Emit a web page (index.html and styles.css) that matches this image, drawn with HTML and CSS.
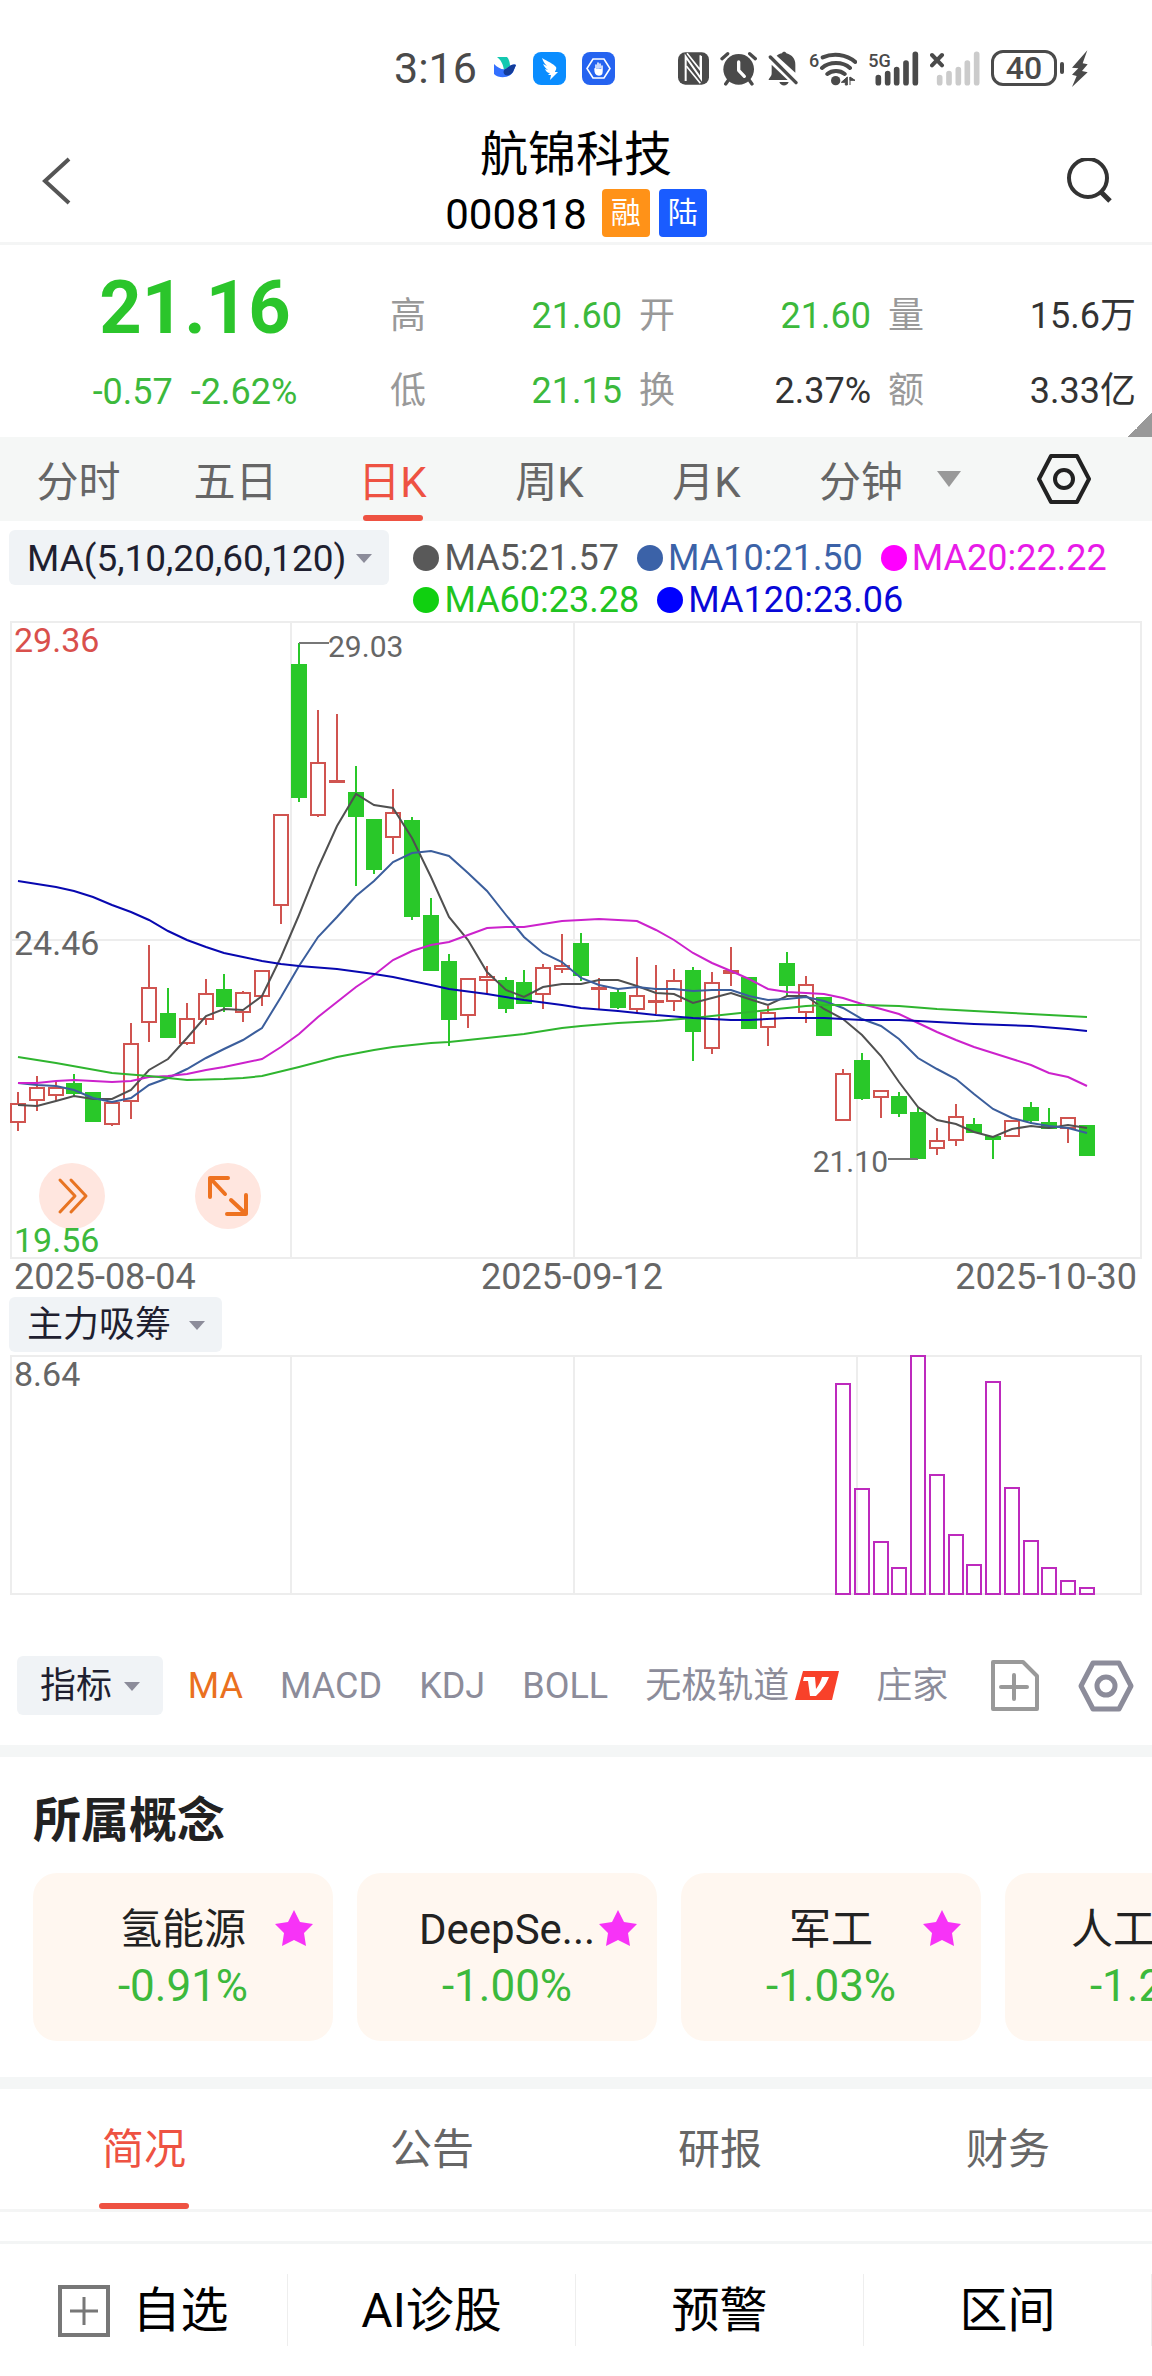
FILE: index.html
```html
<!DOCTYPE html>
<html lang="zh-CN">
<head>
<meta charset="utf-8">
<meta name="viewport" content="width=device-width, initial-scale=1">
<title>航锦科技 000818</title>
<link rel="stylesheet" href="styles.css">
</head>
<body>
<div class="status-bar">
  <div class="status-group status-left">
    <span class="clock">3:16</span>
    <svg width="24" height="24" viewBox="0 0 24 24" aria-hidden="true"><path d="M4 1h10c2 2 3 6 3 9l-6 4C10 8 8 4 4 1z" fill="#14c8b0"/><path d="M1 8c4 4 8 6 12 5 3-1 6-6 10-4l-3 7c-3 6-14 7-19 2z" fill="#3370ff"/><path d="M12 13c3-1 6-6 11-4l-3 7c-2 3-5 4-8 3-2-2-2-4 0-6z" fill="#133c9a"/></svg>
    <svg class="app-icon" width="33" height="33" viewBox="0 0 33 33" aria-hidden="true"><rect width="33" height="33" rx="8" fill="#0a8dff"/><path d="M9 6c5 3 12 6 14 9 1 2-1 4-1 5h3l-8 8 1-5h-3l2-2c-3 0-4-2-5-4l3 1c-3-2-4-4-5-6l4 2c-3-3-4-5-5-8z" fill="#fff"/></svg>
    <svg width="33" height="33" viewBox="0 0 33 33" aria-hidden="true"><rect width="33" height="33" rx="8" fill="#2563f0"/><path d="M11 7h11l6 9.500-6 9.500H11L5 16.500z" fill="none" stroke="#fff" stroke-width="1.600"/><path d="M14 16v-3M16 16v-5M18 16v-4M20 17v-3M13 17c0 4 1 6 4 6s3-2 3-5z" fill="#fff" stroke="#fff" stroke-width="1.500" stroke-linecap="round"/></svg>
  </div>
  <div class="status-group status-right">
    <svg width="31" height="33" viewBox="51 48 93 99" aria-hidden="true"><rect x="51" y="49" width="93" height="97" rx="22" fill="#4a4a4a"/><path d="M74 135V62l46 66V60" fill="none" stroke="#fff" stroke-width="6"/><path d="M78 52l40 50V58M76 90l42 52" fill="none" stroke="#fff" stroke-width="5"/></svg>
    <svg width="37" height="35" viewBox="178 44 111 105" aria-hidden="true"><circle cx="234" cy="99" r="46" fill="#4a4a4a"/><path d="M184 67l17-15M284 67l-17-15M203 132l-8 11M266 132l8 11" stroke="#4a4a4a" stroke-width="10" stroke-linecap="round"/><path d="M234 77v25l17 18" fill="none" stroke="#fff" stroke-width="10" stroke-linecap="round" stroke-linejoin="round"/></svg>
    <svg width="30" height="35" viewBox="323 44 90 105" aria-hidden="true"><path d="M349 58c5-4 11-6 16-7 2-6 11-6 13 0 18 5 27 17 27 34v24zM334 85l48 46h-57c1-7 9-9 9-20zM357 137h28c-4 14-24 14-28 0z" fill="#4a4a4a"/><path d="M330 62l77 77" stroke="#4a4a4a" stroke-width="10" stroke-linecap="round"/></svg>
    <svg width="48" height="35" viewBox="443 44 144 105" aria-hidden="true"><text x="443" y="91" font-size="54" class="status-glyph">6</text><path d="M484 63c30-13 70-11 98 14M482 95c22-20 62-20 84 0M498 113c14-12 38-12 52 0" fill="none" stroke="#4a4a4a" stroke-width="12" stroke-linecap="round"/><circle cx="523" cy="133" r="14" fill="#4a4a4a"/><path d="M558 122v24h-6v-8h-12zM566 122v24M566 122l15 10h-15z" fill="#4a4a4a" stroke="#4a4a4a" stroke-width="3"/></svg>
    <svg width="51" height="35" viewBox="617 44 153 105" aria-hidden="true"><text x="618" y="92" font-size="54" class="status-glyph">5G</text><path d="M648 124v15M676 112v27M703 100v39M731 80v59M759 54v85" stroke="#4a4a4a" stroke-width="17" stroke-linecap="round"/></svg>
    <svg width="50" height="35" viewBox="805 44 150 105" aria-hidden="true"><path d="M811 56l30 31M841 56l-30 31" stroke="#4a4a4a" stroke-width="12" stroke-linecap="round"/><path d="M834 124v15M862 112v27M890 100v39M917 80v59M945 54v85" stroke="#cbcbcb" stroke-width="17" stroke-linecap="round"/></svg>
    <span class="battery">40</span>
    <svg width="17" height="37" viewBox="1230 41 51 111" aria-hidden="true"><path d="M1279 42l-46 52 19 2-19 19 14 4-14 33 47-44-17-4 17-20-15-3z" fill="#4a4a4a"/></svg>
  </div>
</div>

<header class="page-head">
  <button class="icon-button" type="button" aria-label="返回"><svg width="46" height="50" viewBox="0 0 46 50"><path d="M29 2L5 24l24 22" fill="none" stroke="#555" stroke-width="4"/></svg></button>
  <div class="title-block">
    <h1>航锦科技</h1>
    <div class="code-row"><span class="code">000818</span><span class="badge badge-margin">融</span><span class="badge badge-connect">陆</span></div>
  </div>
  <button class="icon-button" type="button" aria-label="搜索"><svg width="46" height="48" viewBox="0 0 46 48"><circle cx="22" cy="20" r="19" fill="none" stroke="#333" stroke-width="4"/><path d="M35 34l9 9" stroke="#333" stroke-width="5"/></svg></button>
</header>

<section class="quote">
  <div class="quote-price">
    <strong>21.16</strong>
    <div class="quote-change"><span>-0.57</span><span>-2.62%</span></div>
  </div>
  <dl class="quote-stats">
    <div><dt>高</dt><dd class="down">21.60</dd></div>
    <div><dt>开</dt><dd class="down">21.60</dd></div>
    <div><dt>量</dt><dd>15.6万</dd></div>
    <div><dt>低</dt><dd class="down">21.15</dd></div>
    <div><dt>换</dt><dd>2.37%</dd></div>
    <div><dt>额</dt><dd>3.33亿</dd></div>
  </dl>
</section>

<nav class="period-tabs">
  <button type="button">分时</button>
  <button type="button">五日</button>
  <button type="button" class="active">日K</button>
  <button type="button">周K</button>
  <button type="button">月K</button>
  <button type="button">分钟</button>
  <div class="period-tools">
    <span class="caret caret-large"></span>
    <button class="icon-button" type="button" aria-label="设置"><svg width="54" height="52" viewBox="0 0 54 52"><path d="M14 3h26l12 23-12 23H14L2 26z" fill="none" stroke="#222" stroke-width="4" stroke-linejoin="round"/><circle cx="27" cy="26" r="9" fill="none" stroke="#222" stroke-width="4"/></svg></button>
  </div>
</nav>

<section class="chart-head">
  <button class="chip" type="button">MA(5,10,20,60,120)<span class="caret"></span></button>
  <ul class="legend">
    <li class="ma5">MA5:21.57</li>
    <li class="ma10">MA10:21.50</li>
    <li class="ma20">MA20:22.22</li>
    <li class="ma60">MA60:23.28</li>
    <li class="ma120">MA120:23.06</li>
  </ul>
</section>

<div class="price-chart">
  <svg viewBox="0 1 1152 676" role="img" aria-label="日K线">
    <g class="grid"><path d="M10 2H1142M10 320H1142M10 638H1142M11 1V638M291 1V638M574 1V638M857 1V638M1141 1V638"/></g>
    <g id="candles"></g>
    <g id="averages"></g>
    <g class="pointer"><path d="M299 23H329M888 539H918"/></g>
    <text x="14" y="32" class="axis-high">29.36</text>
    <text x="14" y="335">24.46</text>
    <text x="328" y="37" class="mark">29.03</text>
    <text x="888" y="552" class="mark end">21.10</text>
    <text x="14" y="669" class="date">2025-08-04</text>
    <text x="572" y="669" class="date middle">2025-09-12</text>
    <text x="1137" y="669" class="date end">2025-10-30</text>
  </svg>
  <button class="round-button round-next" type="button" aria-label="展开"><svg width="66" height="66" viewBox="0 0 66 66"><path d="M21 17l15 16-15 16M32 17l15 16-15 16" fill="none" stroke="#e87422" stroke-width="3" stroke-linecap="round" stroke-linejoin="round"/></svg></button>
  <button class="round-button round-full" type="button" aria-label="全屏"><svg width="66" height="66" viewBox="0 0 66 66"><path d="M15 34V15h18M15 15l15 16M36 37l15 14M32 51h19V32" fill="none" stroke="#ee7220" stroke-width="4" stroke-linecap="round" stroke-linejoin="round"/></svg></button>
  <svg class="overlay" viewBox="0 1 1152 676" aria-hidden="true"><text x="14" y="632" class="axis-low">19.56</text></svg>
</div>

<div class="sub-head"><button class="chip chip-wide" type="button">主力吸筹<span class="caret"></span></button></div>
<div class="sub-chart">
  <svg viewBox="0 0 1152 241" role="img" aria-label="主力吸筹">
    <g class="grid"><path d="M10 1H1142M10 239H1142M11 0V239M291 0V239M574 0V239M857 0V239M1141 0V239"/></g>
    <g id="inflow"></g>
    <text x="14" y="31">8.64</text>
  </svg>
</div>

<nav class="indicators">
  <button class="chip chip-tall" type="button">指标<span class="caret"></span></button>
  <div class="indicator-list">
    <button type="button" class="active">MA</button>
    <button type="button">MACD</button>
    <button type="button">KDJ</button>
    <button type="button">BOLL</button>
    <button type="button">无极轨道<svg width="44" height="31" viewBox="0 0 44 31"><path d="M8 1h36l-7 29H0z" fill="#f8412a"/><path d="M9 7h11l1 12c3-4 5-8 6-12h7c-3 8-7 13-13 19h-6l-2-15H8z" fill="#fff"/></svg></button>
    <button type="button">庄家</button>
  </div>
  <div class="indicator-tools">
    <button class="icon-button" type="button" aria-label="添加指标"><svg width="48" height="52" viewBox="0 0 48 52"><path d="M2 2h30l14 14v33H2z" fill="none" stroke="#999" stroke-width="4" stroke-linejoin="round"/><path d="M23 15v24M10 27h26" stroke="#999" stroke-width="4" stroke-linecap="round"/></svg></button>
    <button class="icon-button" type="button" aria-label="指标设置"><svg width="56" height="52" viewBox="0 0 56 52"><path d="M15 3h26l12 23-12 23H15L3 26z" fill="none" stroke="#8c8c9a" stroke-width="5" stroke-linejoin="round"/><circle cx="28" cy="26" r="9" fill="none" stroke="#8c8c9a" stroke-width="5"/></svg></button>
  </div>
</nav>

<section class="concepts">
  <h2>所属概念</h2>
  <div class="concept-row">
    <a class="concept" href="#">氢能源<span>-0.91%</span><svg class="star" width="38" height="36" viewBox="0 0 38 36"><path d="M19 0l6 12 13 2-9 9 2 13-12-6-12 6 2-13-9-9 13-2z"/></svg></a>
    <a class="concept" href="#">DeepSe...<span>-1.00%</span><svg class="star" width="38" height="36" viewBox="0 0 38 36"><path d="M19 0l6 12 13 2-9 9 2 13-12-6-12 6 2-13-9-9 13-2z"/></svg></a>
    <a class="concept" href="#">军工<span>-1.03%</span><svg class="star" width="38" height="36" viewBox="0 0 38 36"><path d="M19 0l6 12 13 2-9 9 2 13-12-6-12 6 2-13-9-9 13-2z"/></svg></a>
    <a class="concept" href="#">人工智能<span>-1.20%</span></a>
  </div>
</section>

<nav class="info-tabs">
  <button type="button" class="active">简况</button>
  <button type="button">公告</button>
  <button type="button">研报</button>
  <button type="button">财务</button>
</nav>

<footer class="action-bar">
  <button type="button"><svg width="52" height="52" viewBox="0 0 52 52"><path d="M2 2h48v48H2z" fill="none" stroke="#777" stroke-width="4"/><path d="M26 12v28M12 26h28" stroke="#777" stroke-width="3"/></svg>自选</button>
  <button type="button">AI诊股</button>
  <button type="button">预警</button>
  <button type="button">区间</button>
</footer>
<script src="chart.js"></script>
</body>
</html>
```
FILE: styles.css
```css
* { box-sizing: border-box; }

body {
  margin: 0;
  background: #fff;
  color: #333;
  font-family: Roboto, "Noto Sans CJK SC", sans-serif;
  overflow-x: hidden;
}

h1, h2, dl, dd, ul { margin: 0; padding: 0; }
ul { list-style: none; }
svg { display: block; flex: none; }

button {
  border: 0;
  padding: 0;
  background: none;
  color: inherit;
  font: inherit;
  white-space: nowrap;
}

/* Status bar */
.status-bar {
  display: flex;
  justify-content: space-between;
  align-items: center;
  padding: 46px 64px 0 394px;
  height: 90px;
  color: #4a4a4a;
}
.status-group { display: flex; align-items: center; }
.status-left { gap: 16px; }
.status-right { gap: 11px; }
.clock { font-size: 43px; line-height: 44px; }
.status-glyph { fill: #4a4a4a; font-weight: 500; }
.battery {
  position: relative;
  width: 66px;
  margin-right: 3px;
  border: 3px solid #4a4a4a;
  border-radius: 12px;
  font-size: 32px;
  font-weight: 500;
  line-height: 30px;
  text-align: center;
}
.battery::after {
  content: "";
  position: absolute;
  top: 9px;
  right: -10px;
  width: 4px;
  height: 12px;
  border-radius: 2px;
  background: #4a4a4a;
}

/* Title */
.page-head {
  display: flex;
  justify-content: space-between;
  align-items: center;
  padding: 36px 40px 5px;
  border-bottom: 3px solid #f4f5f5;
  color: #000;
}
.title-block { display: flex; flex-direction: column; align-items: center; gap: 5px; }
h1 { font-size: 48px; font-weight: 400; line-height: 58px; }
.code-row { display: flex; align-items: center; gap: 9px; font-size: 42px; line-height: 48px; }
.code { padding-top: 4px; line-height: 44px; }
.badge { width: 48px; border-radius: 4px; color: #fff; font-size: 30px; text-align: center; }
.badge-margin { margin-left: 6px; background: #ff9218; }
.badge-connect { background: #1a5cff; }

/* Quote */
.quote {
  position: relative;
  display: grid;
  grid-template-columns: 390fr 746fr;
  padding-right: 16px;
  height: 192px;
}
.quote::after {
  content: "";
  position: absolute;
  right: 0;
  bottom: 0;
  width: 24px;
  height: 24px;
  background: linear-gradient(135deg, transparent 50%, #999 50%);
}
.quote-price {
  display: flex;
  flex-direction: column;
  align-items: center;
  gap: 25px;
  padding-top: 26px;
  color: #2bc52b;
}
.quote-price strong { font-size: 74px; line-height: 74px; }
.quote-change { display: flex; gap: 18px; font-size: 36px; line-height: 44px; color: #3cb93c; }
.quote-stats {
  display: grid;
  grid-template-columns: 232fr 232fr 248fr;
  gap: 15px 17px;
  align-content: start;
  padding-top: 41px;
  font-size: 36px;
  line-height: 60px;
}
.quote-stats div { display: flex; justify-content: space-between; }
.quote-stats dt { color: #999; }
.down { color: #3cb93c; }

/* Period tabs */
.period-tabs {
  display: grid;
  grid-template-columns: repeat(5, 157fr) 152fr 215fr;
  background: #f5f7f6;
  color: #666;
  font-size: 42px;
  line-height: 76px;
}
.period-tabs > * { padding-top: 8px; }
.active { position: relative; color: #ee5242; }
.period-tabs .active::after, .info-tabs .active::after {
  content: "";
  position: absolute;
  left: 50%;
  bottom: 0;
  width: 60px;
  height: 6px;
  margin-left: -30px;
  border-radius: 3px;
  background: #ee5242;
}
.period-tools { display: flex; align-items: center; justify-content: space-between; padding: 4px 61px 4px 0; }
.caret {
  border: 8px solid transparent;
  border-top: 9px solid #8c8c9a;
  border-bottom: 0;
}
.caret-large { border-width: 16px 12px 0; border-top-color: #999; }

/* Chart header */
.chart-head { display: flex; align-items: flex-start; gap: 24px; padding: 9px 9px 0; }
.chip {
  display: flex;
  align-items: center;
  gap: 8px;
  flex: none;
  padding: 2px 17px 0 18px;
  border-radius: 6px;
  background: #f0f3f6;
  color: #1f1f30;
  font-size: 36px;
  line-height: 53px;
}
.chart-head .chip { gap: 10px; font-size: 37px; }
.legend { display: flex; flex: 1; flex-wrap: wrap; column-gap: 18px; padding-top: 7px; font-size: 36px; line-height: 42px; }
.legend li { display: flex; align-items: center; gap: 5px; }
.legend li::before { content: ""; width: 26px; height: 26px; border-radius: 50%; background: currentColor; }
.ma5 { color: #595959; }
.ma10 { color: #3b62a8; }
.ma20 { color: #e81be8; }
.ma60 { color: #20c420; }
.ma120 { color: #0808d8; }
.legend .ma20::before { background: #f0f; }
.legend .ma60::before { background: #10d010; }
.legend .ma120::before { background: #00f; }

/* Charts */
.price-chart { position: relative; }
.price-chart > svg, .sub-chart > svg { width: 100%; height: auto; }
.price-chart > .overlay { position: absolute; top: 0; left: 0; pointer-events: none; }
.price-chart text, .sub-chart text { fill: #666; font-size: 34px; }
.price-chart .axis-high { fill: #d9504c; }
.price-chart .axis-low { fill: #3cb93c; }
.price-chart .mark { font-size: 30px; }
.price-chart .date { font-size: 36px; }
.end { text-anchor: end; }
.middle { text-anchor: middle; }
.grid path { stroke: #ededed; stroke-width: 2; fill: none; }
.pointer path { stroke: #777; stroke-width: 2; }
.candle-up { stroke: #d05450; stroke-width: 2; fill: none; }
.candle-down { stroke: #29c829; stroke-width: 2; fill: #29c829; }
.average { fill: none; stroke-width: 2; }
.average-5 { stroke: #505050; }
.average-10 { stroke: #3b5e9c; }
.average-20 { stroke: #cc22cc; }
.average-60 { stroke: #2fb52f; }
.average-120 { stroke: #0808b0; }
.inflow-bar { fill: none; stroke: #bd2abd; stroke-width: 2; }
.round-button {
  position: absolute;
  top: 542px;
  width: 66px;
  height: 66px;
  border-radius: 50%;
  background: #ffe6df;
}
.round-next { left: 39px; }
.round-full { left: 195px; }
.sub-head { padding: 0 9px 3px; }
.chip-wide { gap: 18px; }

/* Indicators */
.indicators {
  display: flex;
  align-items: center;
  justify-content: space-between;
  padding: 60px 18px 30px 17px;
  color: #8c8c9a;
  font-size: 36px;
  border-bottom: 12px solid #f4f6f6;
}
.chip-tall { padding: 2px 23px 0; gap: 12px; line-height: 57px; }
.indicator-list { display: flex; align-items: center; gap: 37px; line-height: 44px; }
.indicator-list button { display: flex; align-items: center; gap: 6px; }
.indicator-list .active { color: #ea7020; }
.indicator-tools { display: flex; gap: 39px; margin-left: 18px; }

/* Concepts */
.concepts { padding: 32px 0 36px 33px; border-bottom: 12px solid #f4f6f6; overflow: hidden; }
h2 { color: #222; font-size: 48px; line-height: 64px; }
.concept-row { display: flex; gap: 24px; margin-top: 20px; }
.concept {
  position: relative;
  display: flex;
  flex: none;
  flex-direction: column;
  align-items: center;
  width: 300px;
  padding: 28px 0 26px;
  border-radius: 24px;
  background: #fff7f0;
  color: #222;
  font-size: 42px;
  line-height: 57px;
  text-decoration: none;
}
.concept span { color: #3cb93c; font-size: 44px; }
.star { position: absolute; top: 37px; right: 20px; fill: #f733f7; }

/* Info tabs */
.info-tabs {
  display: grid;
  grid-template-columns: repeat(4, 1fr);
  border-bottom: 3px solid #f4f5f5;
  color: #666;
  font-size: 42px;
  line-height: 118px;
}
.info-tabs button { padding-top: 2px; }
.info-tabs .active::after { width: 90px; margin-left: -45px; }

/* Bottom actions */
.action-bar {
  display: grid;
  grid-template-columns: repeat(4, 1fr);
  margin-top: 29px;
  padding: 30px 0;
  border-top: 3px solid #f3f5f5;
  color: #000;
  font-size: 48px;
  line-height: 70px;
}
.action-bar button { display: flex; align-items: center; justify-content: center; gap: 22px; padding-top: 2px; border-right: 1px solid #eee; }
```
FILE: chart.js
```js
const NS = "http://www.w3.org/2000/svg";
const FIRST_X = 18;
const STEP = 18.75;

function add(parent, tag, attrs) {
  const node = document.createElementNS(NS, tag);
  for (const key in attrs) node.setAttribute(key, attrs[key]);
  parent.appendChild(node);
}

const xAt = (i) => Math.round(FIRST_X + i * STEP);

// direction, wick top, body top, body bottom, wick bottom
const candles = [
  ["u",472,483,503,511],["u",456,467,481,491],["u",461,467,476,481],["d",454,463,474,477],["d",472,472,502,502],
  ["u",482,482,505,506],["u",403,423,482,499],["u",325,367,403,422],["d",368,393,418,418],["u",383,398,424,425],
  ["u",359,373,400,405],["d",354,369,387,392],["u",371,372,393,402],["u",350,350,377,386],["u",194,194,286,304],
  ["d",23,44,178,182],["u",90,142,196,197],["u",94,160,163,163],["d",146,172,197,266],["d",199,199,250,254],
  ["u",169,192,218,234],["d",197,200,297,300],["d",278,295,351,351],["d",334,341,400,426],["u",358,358,396,408],
  ["u",346,356,361,374],["d",357,360,389,393],["d",350,362,384,384],["u",344,347,375,389],["u",314,345,350,353],
  ["d",313,323,356,361],["u",358,367,370,389],["d",368,372,388,389],["u",337,375,390,393],["u",345,380,382,394],
  ["u",349,360,382,391],["d",347,350,412,441],["u",352,362,429,434],["u",327,350,354,366],["d",357,357,409,409],
  ["u",386,392,408,426],["d",332,343,366,377],["u",356,364,393,403],["d",377,377,416,416],["u",449,453,501,501],
  ["d",433,440,479,480],["u",470,470,478,498],["d",472,476,494,497],["d",487,492,539,539],["u",508,520,529,535],
  ["u",484,496,521,526],["d",498,504,513,513],["d",516,516,520,539],["u",500,500,517,517],["d",482,487,501,504],
  ["d",488,502,509,509],["u",497,497,509,523],["d",505,505,536,536]
];

const candleLayer = document.getElementById("candles");
candles.forEach(([dir, high, top, bottom, low], i) => {
  const x = xAt(i);
  const name = dir === "u" ? "candle-up" : "candle-down";
  const wick = `M${x} ${high}V${top}M${x} ${bottom}V${low}`;
  add(candleLayer, "path", { d: wick, class: name });
  add(candleLayer, "rect", { x: x - 7, y: top + 1, width: 14, height: Math.max(bottom - top - 2, 1), class: name });
});

const averages = {
  60: [[0,437],[2,443],[5,453],[7,456],[9,460],[11,459],[12,458],[13,456],[15,447],[17,437],[19,430],[20,427],[22,423],[23,422],[25,418],[27,414],[29,408],[30,406],[32,403],[34,401],[36,398],[38,394],[40,390],[42,386],[43,385],[45,385],[47,386],[49,389],[51,391],[53,393],[55,395],[57,397]],
  20: [463,463,461,460,461,462,461,457,456,454,450,447,443,439,427,414,397,382,367,355,340,331,325,322,315,308,307,307,304,301,300,299,300,301,310,320,333,343,351,359,369,372,373,374,378,384,389,394,403,412,420,427,433,439,445,453,457,466],
  5: [485,486,481,476,479,479,470,450,439,418,396,389,390,376,337,295,248,206,174,185,188,218,257,297,320,352,370,377,367,364,364,360,360,366,373,374,383,378,373,379,385,376,376,389,399,415,436,462,487,500,504,512,517,509,506,508,505,508],
  10: [463,465,466,470,478,482,478,465,458,449,438,429,420,408,377,346,317,297,276,261,242,233,231,236,253,271,295,317,333,342,358,365,369,367,369,369,371,370,370,376,380,379,377,381,388,399,406,419,438,449,459,474,489,498,503,506,508,513],
  120: [[0,261],[1,264],[2,267],[3,271],[4,277],[5,285],[6,292],[7,300],[8,311],[9,320],[10,327],[11,333],[12,337],[13,341],[14,344],[15,346],[17,349],[19,354],[20,357],[22,365],[23,369],[25,374],[27,380],[29,385],[30,388],[32,391],[34,395],[36,398],[38,400],[39,400],[41,398],[43,398],[45,400],[47,400],[49,402],[51,404],[54,406],[56,409],[57,411]]
};

const averageLayer = document.getElementById("averages");
for (const period in averages) {
  const points = averages[period]
    .map((p, i) => (Array.isArray(p) ? p : [i, p]))
    .map(([i, y]) => `${xAt(i)},${y}`)
    .join(" ");
  add(averageLayer, "polyline", { points, class: `average average-${period}` });
}

// Tops of the inflow bars for the last fourteen sessions
const inflow = [28,133,186,212,0,119,179,209,26,132,185,212,225,232];
const inflowLayer = document.getElementById("inflow");
inflow.forEach((top, i) => {
  add(inflowLayer, "rect", { x: xAt(44 + i) - 7, y: top + 1, width: 14, height: 238 - top, class: "inflow-bar" });
});
```
